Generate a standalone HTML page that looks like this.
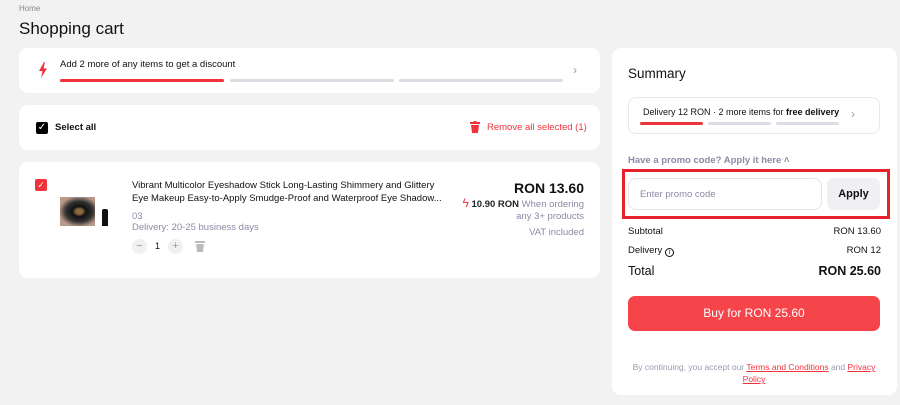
<!DOCTYPE html><html><head><style>
*{margin:0;padding:0;box-sizing:border-box}
body{width:900px;height:405px;background:#f2f2f2;font-family:"Liberation Sans",sans-serif;position:relative;overflow:hidden;color:#111}
.a{position:absolute}
.card{position:absolute;background:#fff;border-radius:9px}
.bar{position:absolute;height:3px;border-radius:2px;background:#dcdce4}
</style></head><body>
<div class="a" style="left:19px;top:4px;font-size:8px;color:#888">Home</div>
<div class="a" style="left:19px;top:19px;font-size:17px;font-weight:500">Shopping cart</div>

<div class="card" style="left:19px;top:48px;width:581px;height:45px">
<svg class="a" style="left:19px;top:14px" width="10" height="16" viewBox="0 0 10 16"><path d="M6 0L1 9h3.5L3 16l6-9.5H5.5L7 0z" fill="#f0323c"/></svg>
<div class="a" style="left:41px;top:11px;font-size:9.5px">Add 2 more of any items to get a discount</div>
<div class="bar" style="left:41px;top:31px;width:164px;background:#f0323c"></div>
<div class="bar" style="left:211px;top:31px;width:164px"></div>
<div class="bar" style="left:380px;top:31px;width:164px"></div>
<div class="a" style="left:554px;top:15px;font-size:12px;color:#999">›</div>
</div>

<div class="card" style="left:19px;top:105px;width:581px;height:45px">
<div class="a" style="left:17px;top:17px;width:12px;height:12px;background:#000;border-radius:2px;color:#fff;font-size:10px;line-height:12px;text-align:center">✓</div>
<div class="a" style="left:36px;top:17px;font-size:9.5px;font-weight:bold">Select all</div>
<svg class="a" style="left:451px;top:16px" width="10" height="12" viewBox="0 0 10 12"><rect x="0" y="1" width="10" height="2" fill="#f0323c"/><rect x="3.5" y="0" width="3" height="2" fill="#f0323c"/><path d="M1 4h8l-1 8H2z" fill="#f0323c"/></svg>
<div class="a" style="left:468px;top:17px;font-size:9.5px;color:#f0323c">Remove all selected (1)</div>
</div>

<div class="card" style="left:19px;top:162px;width:581px;height:116px">
<div class="a" style="left:16px;top:17px;width:12px;height:12px;background:#f0323c;border-radius:2px;color:#fff;font-size:9px;line-height:12px;text-align:center">✓</div>
<div class="a" style="left:41px;top:35px;width:35px;height:29px;background:radial-gradient(ellipse at 55% 50%,#8a6a40 0 12%,#111 25%,#333 50%,#b99a88 75%)"></div>
<div class="a" style="left:78px;top:35px;width:16px;height:30px;background:#fff"><div class="a" style="left:5px;top:12px;width:6px;height:17px;background:#111;border-radius:2px 2px 0 0"></div></div>
<div class="a" style="left:113px;top:17px;font-size:9.5px;line-height:13px;width:315px">Vibrant Multicolor Eyeshadow Stick Long-Lasting Shimmery and Glittery<br>Eye Makeup Easy-to-Apply Smudge-Proof and Waterproof Eye Shadow...</div>
<div class="a" style="left:113px;top:49px;font-size:9.5px;color:#8a8aa8">03</div>
<div class="a" style="left:113px;top:60px;font-size:9.5px;color:#8a8aa8">Delivery: 20-25 business days</div>
<div class="a" style="left:113px;top:77px;width:15px;height:15px;border-radius:50%;background:#f0f0f2;color:#999;font-size:11px;line-height:14px;text-align:center">−</div>
<div class="a" style="left:136px;top:79px;font-size:9px">1</div>
<div class="a" style="left:149px;top:77px;width:15px;height:15px;border-radius:50%;background:#f0f0f2;color:#999;font-size:11px;line-height:14px;text-align:center">+</div>
<svg class="a" style="left:176px;top:78px" width="10" height="12" viewBox="0 0 10 12"><rect x="0" y="1" width="10" height="2" fill="#bbb"/><path d="M1 4h8l-1 8H2z" fill="#bbb"/></svg>
<div class="a" style="right:16px;top:18px;font-size:14px;font-weight:bold">RON 13.60</div>
<div class="a" style="right:16px;top:35px;font-size:9.5px;color:#8a8aa8;text-align:right;line-height:12px"><span style="color:#f0323c;font-size:12px">ϟ</span> <b style="color:#222">10.90 RON</b> When ordering<br>any 3+ products</div>
<div class="a" style="right:16px;top:65px;font-size:9.5px;color:#8a8aa8">VAT included</div>
</div>

<div class="card" style="left:612px;top:48px;width:285px;height:347px">
<div class="a" style="left:16px;top:18px;font-size:13.5px;font-weight:500">Summary</div>
<div class="a" style="left:16px;top:49px;width:252px;height:37px;border:1px solid #e8e8ee;border-radius:8px">
<div class="a" style="left:14px;top:9px;font-size:9px;white-space:nowrap">Delivery 12 RON · 2 more items for <b>free delivery</b></div>
<div class="bar" style="left:11px;top:24px;width:63px;background:#f0323c"></div>
<div class="bar" style="left:79px;top:24px;width:63px"></div>
<div class="bar" style="left:147px;top:24px;width:63px"></div>
<div class="a" style="left:222px;top:9px;font-size:12px;color:#999">›</div>
</div>
<div class="a" style="left:16px;top:107px;font-size:9.5px;color:#8a8aa8;font-weight:bold">Have a promo code? Apply it here ˄</div>
<div class="a" style="left:10px;top:121px;width:268px;height:50px;border:3px solid #e8202a"></div>
<div class="a" style="left:16px;top:130px;width:194px;height:32px;border:1px solid #e4e4ea;border-radius:8px;font-size:9.5px;color:#8a8aa8;padding:10px 11px">Enter promo code</div>
<div class="a" style="left:215px;top:130px;width:53px;height:32px;background:#f0f0f4;border-radius:7px;font-size:11px;font-weight:bold;text-align:center;line-height:32px">Apply</div>
<div class="a" style="left:16px;top:178px;font-size:9.5px">Subtotal</div><div class="a" style="right:16px;top:178px;font-size:9.5px">RON 13.60</div>
<div class="a" style="left:16px;top:197px;font-size:9.5px">Delivery <span style="display:inline-block;width:9px;height:9px;border:1px solid #111;border-radius:50%;font-size:7px;line-height:7px;text-align:center;vertical-align:-1px">i</span></div><div class="a" style="right:16px;top:197px;font-size:9.5px">RON 12</div>
<div class="a" style="left:16px;top:216px;font-size:12.5px">Total</div><div class="a" style="right:16px;top:216px;font-size:12.5px;font-weight:bold">RON 25.60</div>
<div class="a" style="left:16px;top:248px;width:252px;height:35px;background:#f5444a;border-radius:7px;color:#fff;font-size:12px;text-align:center;line-height:35px">Buy for RON 25.60</div>
<div class="a" style="left:16px;top:313px;width:252px;font-size:8.5px;color:#9a9ab0;text-align:center;line-height:12px">By continuing, you accept our <u style="color:#f0323c">Terms and Conditions</u> and <u style="color:#f0323c">Privacy Policy</u></div>
</div>
</body></html>
